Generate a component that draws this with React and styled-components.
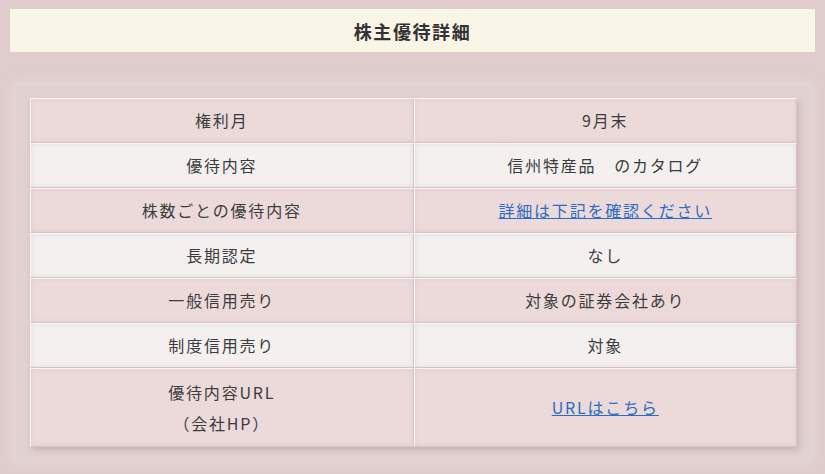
import React from "react";
import styled, { createGlobalStyle } from "styled-components";

const Global = createGlobalStyle`
  html, body { margin: 0; padding: 0; background: #dfcccd; }
  body { font-family: "Noto Sans CJK JP", "Noto Sans", sans-serif; color: #3c3c3c; }
`;

const Page = styled.div`
  padding: 9px 10px 20px;
  display: flex;
  flex-direction: column;
`;

const Heading = styled.h2`
  margin: 0;
  height: 43px;
  background: #faf6e7;
  display: flex;
  align-items: center;
  justify-content: center;
  font-size: 18px;
  letter-spacing: 1.6px;
  font-weight: 700;
  color: #333;
`;

const Panel = styled.div`
  margin: 33px 5px 0;
  padding: 13px 13px 13px 15px;
  background: #e2d1d1;
  box-shadow: 0 0 12px 4px rgba(230, 216, 216, 0.9);
`;

const Table = styled.table`
  width: 100%;
  border-collapse: separate;
  border-spacing: 0;
  box-shadow: 2px 3px 6px rgba(80, 40, 40, 0.18);
  font-size: 16px;
  letter-spacing: 1.8px;
`;

const Row = styled.tr`
  background: ${(p) => (p.$alt ? "#f4f0f0" : "#ecdadb")};
`;

const Cell = styled.td`
  width: 50%;
  height: ${(p) => (p.$tall ? "79px" : "45px")};
  padding: 0 8px;
  text-align: center;
  vertical-align: middle;
  line-height: 31px;
  border-top: 1px solid #fbf7f7;
  border-left: 1px solid #fbf7f7;
  border-bottom: 1px solid #d6c4c5;
  border-right: 1px solid #d6c4c5;
  box-shadow: inset 0 0 4px rgba(180, 150, 150, 0.25);
  box-sizing: border-box;
  color: #3c3c3c;
`;

const Link = styled.a`
  color: #2b6cc4;
  text-decoration: underline;
`;

const rows = [
  ["権利月", "9月末"],
  ["優待内容", "信州特産品　のカタログ"],
  ["株数ごとの優待内容", { link: "詳細は下記を確認ください" }],
  ["長期認定", "なし"],
  ["一般信用売り", "対象の証券会社あり"],
  ["制度信用売り", "対象"],
];

export default function App() {
  return (
    <>
      <Global />
      <Page>
        <Heading>株主優待詳細</Heading>
        <Panel>
          <Table>
            <tbody>
              {rows.map(([k, v], i) => (
                <Row key={k} $alt={i % 2 === 1}>
                  <Cell>{k}</Cell>
                  <Cell>{typeof v === "string" ? v : <Link href="#">{v.link}</Link>}</Cell>
                </Row>
              ))}
              <Row>
                <Cell $tall>
                  優待内容URL
                  <br />
                  （会社HP）
                </Cell>
                <Cell $tall>
                  <Link href="#">URLはこちら</Link>
                </Cell>
              </Row>
            </tbody>
          </Table>
        </Panel>
      </Page>
    </>
  );
}
